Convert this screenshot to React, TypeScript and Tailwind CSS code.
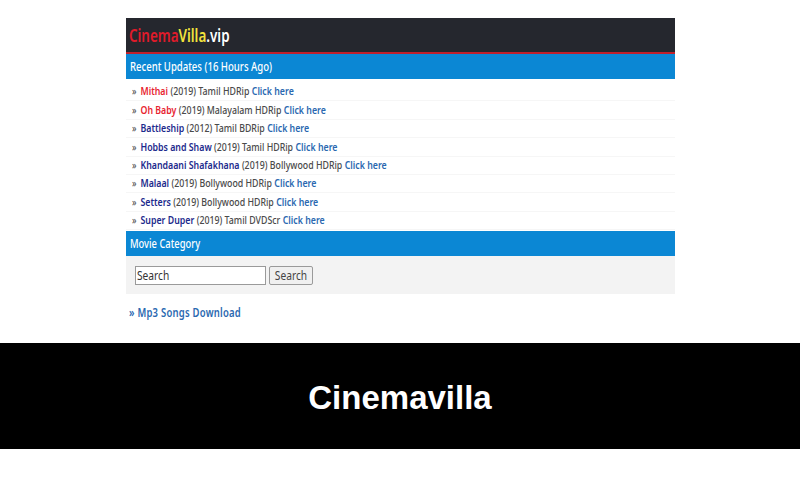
const rows: [string, string, string][] = [
  ["Mithai", "(2019) Tamil HDRip", "text-[#e8232f]"],
  ["Oh Baby", "(2019) Malayalam HDRip", "text-[#e8232f]"],
  ["Battleship", "(2012) Tamil BDRip", "text-[#1c2a8c]"],
  ["Hobbs and Shaw", "(2019) Tamil HDRip", "text-[#1c2a8c]"],
  ["Khandaani Shafakhana", "(2019) Bollywood HDRip", "text-[#1c2a8c]"],
  ["Malaal", "(2019) Bollywood HDRip", "text-[#1c2a8c]"],
  ["Setters", "(2019) Bollywood HDRip", "text-[#1c2a8c]"],
  ["Super Duper", "(2019) Tamil DVDScr", "text-[#1c2a8c]"],
];

const font = "font-['Noto_Sans','Open_Sans',sans-serif]";

export default function App() {
  return (
    <div className={`w-[800px] h-[500px] bg-white flex flex-col overflow-hidden ${font}`}>
      <div className="h-[343px] pt-[18px] pl-[126px]">
        <div className="w-[549px]">
          <div className="h-[34px] bg-[#25272e] flex items-center pl-[3px] pt-[2px] text-[17px] font-semibold">
            <div className="origin-left scale-x-[0.79] whitespace-nowrap">
              <span className="text-[#e01b2a]">Cinema</span>
              <span className="text-[#f2e33c]">Villa</span>
              <span className="text-white">.vip</span>
            </div>
          </div>
          <div className="h-[2px] bg-[#c0202c]" />
          <div className="h-[25px] bg-[#0b87d4] flex items-center pl-[4px] pt-[1px] text-[13px] font-medium text-white">
            <div className="origin-left scale-x-[0.735] whitespace-nowrap">Recent Updates (16 Hours Ago)</div>
          </div>
          <div className="h-[152px] pt-[4px] flex flex-col">
            {rows.map(([name, info, color]) => (
              <div key={name} className="h-[18.4px] shrink-0 flex items-center pl-[6px] border-b border-[#f6f6f6] text-[11px] whitespace-nowrap">
                <div className="flex items-center gap-[3px] origin-left scale-x-[0.8]">
                  <span className="text-[#444] mr-[2px]">»</span>
                  <span className={`font-semibold ${color}`}>{name}</span>
                  <span className="text-[#4a4a4a] font-medium">{info}</span>
                  <span className="text-[#2a68b0] font-semibold">Click here</span>
                </div>
              </div>
            ))}
          </div>
          <div className="h-[25px] bg-[#0b87d4] flex items-center pl-[4px] pt-[1px] text-[13px] font-medium text-white">
            <div className="origin-left scale-x-[0.72] whitespace-nowrap">Movie Category</div>
          </div>
          <div className="h-[38px] bg-[#f3f3f3] flex items-center pl-[9px] gap-[3px] pt-[1px]">
            <div className="w-[131px] h-[19px] bg-white border border-[#9a9a9a] flex items-center pl-[1px] text-[12px] text-[#333]">
              <div className="origin-left scale-x-[0.85]">Search</div>
            </div>
            <div className="w-[44px] h-[19px] bg-[#f0f0f0] border border-[#9a9a9a] rounded-[2px] flex items-center justify-center text-[12px] text-[#444]">
              <div className="scale-x-[0.85]">Search</div>
            </div>
          </div>
          <div className="mt-[10px] pl-[3px] text-[12px] font-semibold tracking-[0.3px] text-[#2a68b0]">
            <div className="origin-left scale-x-[0.79] whitespace-nowrap">» Mp3 Songs Download</div>
          </div>
        </div>
      </div>
      <div className="h-[106px] bg-black flex items-center justify-center font-['Liberation_Sans',sans-serif] font-bold text-white text-[33px] pt-[3px]">
        Cinemavilla
      </div>
    </div>
  );
}
